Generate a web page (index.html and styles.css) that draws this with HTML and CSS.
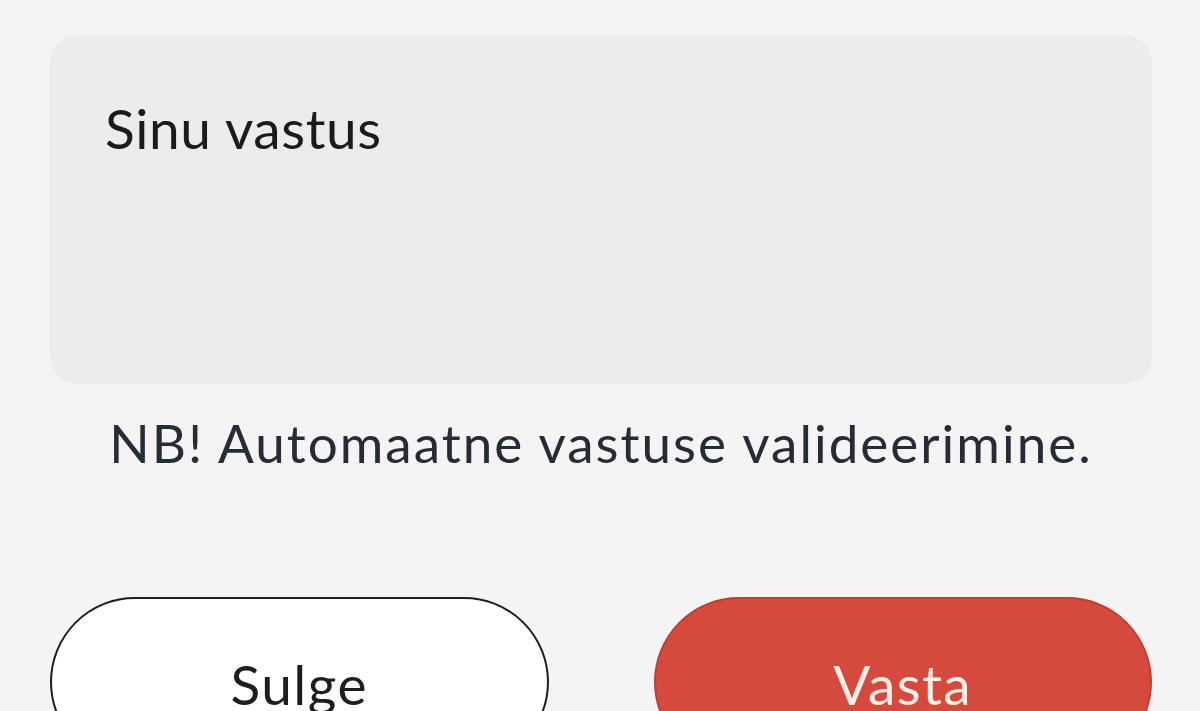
FILE: index.html
```html
<!DOCTYPE html>
<html lang="et">
<head>
<meta charset="utf-8">
<link rel="stylesheet" href="styles.css">
</head>
<body>
<div class="page">
  <div class="answer-box">
    <div class="placeholder">Sinu vastus</div>
  </div>
  <p class="note">NB! Automaatne vastuse valideerimine.</p>
  <div class="actions">
    <button class="btn btn-close">Sulge</button>
    <button class="btn btn-submit">Vasta</button>
  </div>
</div>
</body>
</html>
```
FILE: styles.css
```css
html, body {
  margin: 0;
  padding: 0;
  background: #f4f4f4;
  height: 711px;
  overflow: hidden;
}
.page {
  font-family: Lato, "Noto Sans", sans-serif;
  padding: 35px 48px 0 50px;
  display: flex;
  flex-direction: column;
}
.answer-box {
  background: #ececec;
  border-radius: 28px;
  height: 349px;
  box-sizing: border-box;
  padding: 63px 0 0 55px;
}
.placeholder {
  font-size: 55px;
  line-height: 60px;
  letter-spacing: 0.6px;
  color: #1b1b1b;
}
.note {
  margin: 26px 0 0;
  text-align: center;
  font-size: 53px;
  line-height: 66px;
  letter-spacing: 2px;
  color: #262c35;
}
.actions {
  margin-top: 121px;
  display: flex;
  gap: 105px;
}
.btn {
  flex: 1;
  height: 170px;
  border-radius: 85px;
  font-family: Lato, "Noto Sans", sans-serif;
  font-size: 55px;
  line-height: 70px;
  letter-spacing: 1.5px;
  display: flex;
  justify-content: center;
  align-items: flex-start;
  padding-top: 50px;
  box-sizing: border-box;
}
.btn-close {
  background: #ffffff;
  border: 2.5px solid #1e1e1e;
  color: #1e1e1e;
}
.btn-submit {
  background: #d54a3d;
  border: 2px solid #bd3f31;
  color: #fdeee8;
}
```
